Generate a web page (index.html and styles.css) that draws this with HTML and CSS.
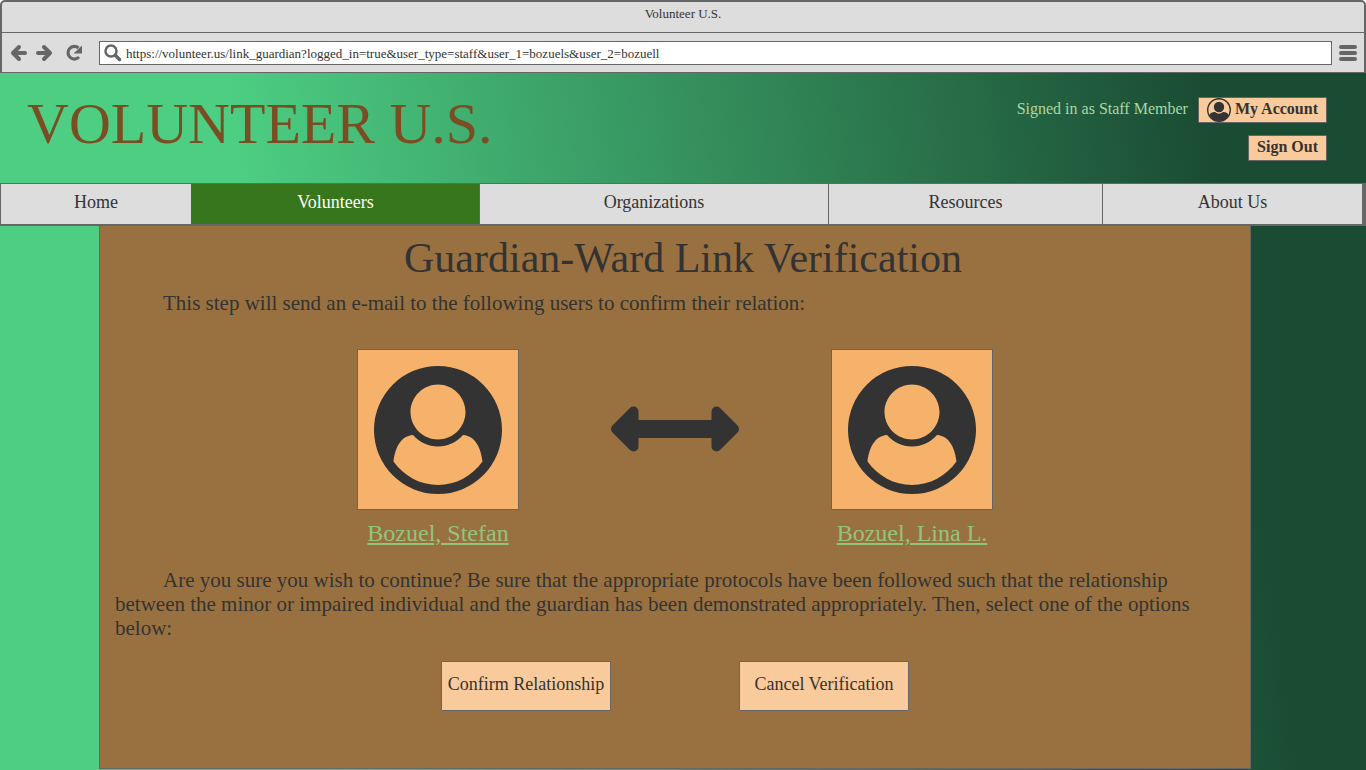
FILE: index.html
```html
<!DOCTYPE html>
<html lang="en">
<head>
<meta charset="utf-8">
<meta name="viewport" content="width=device-width, initial-scale=1">
<title>Volunteer U.S.</title>
<link rel="stylesheet" href="styles.css">
</head>
<body>
<svg class="defs" aria-hidden="true">
  <symbol id="person" viewBox="0 0 128 128">
    <path fill-rule="evenodd" d="M64 0a64 64 0 1 1 0 128a64 64 0 1 1 0-128zM64 18.500C49 18.500 36.500 31 36.500 46S49 73.500 64 73.500S91.500 61 91.500 46S79 18.500 64 18.500zM39 69C26 70 21 83 19.500 95.500C30 110 46 119 64 119S98 110 108.500 95.500C107 83 102 70 89 69C82 76.500 74 80.500 64 80.500S46 76.500 39 69z"/>
  </symbol>
</svg>
<div class="window">
  <div class="chrome">
    <div class="titlebar">Volunteer U.S.</div>
    <div class="toolbar">
      <button class="tool" type="button" aria-label="Back"><svg width="18" height="18" viewBox="0 0 18 18"><path d="M9 3L3 9l6 6M3 9h12" fill="none" stroke="currentColor" stroke-width="4" stroke-linecap="round" stroke-linejoin="round"/></svg></button>
      <button class="tool" type="button" aria-label="Forward"><svg width="18" height="18" viewBox="0 0 18 18"><path d="M9 3l6 6-6 6M15 9H3" fill="none" stroke="currentColor" stroke-width="4" stroke-linecap="round" stroke-linejoin="round"/></svg></button>
      <button class="tool reload" type="button" aria-label="Reload"><svg width="18" height="18" viewBox="0 0 18 18"><path d="M13.500 4A6.300 6.300 0 1 0 14 13" fill="none" stroke="currentColor" stroke-width="3.200"/><path d="M17 1.500v8H8.500z" fill="currentColor"/></svg></button>
      <label class="address">
        <svg width="18" height="18" viewBox="0 0 18 18" aria-hidden="true"><circle cx="7" cy="7" r="5.500" fill="none" stroke="currentColor" stroke-width="2.500"/><path d="M11.500 11.500l4 4" stroke="currentColor" stroke-width="3.500" stroke-linecap="round"/></svg>
        <input type="text" aria-label="Address" value="https://volunteer.us/link_guardian?logged_in=true&amp;user_type=staff&amp;user_1=bozuels&amp;user_2=bozuell">
      </label>
      <button class="tool" type="button" aria-label="Menu"><svg width="18" height="18" viewBox="0 0 18 18"><path d="M2 3h14M2 9h14M2 15h14" stroke="currentColor" stroke-width="4" stroke-linecap="round"/></svg></button>
    </div>
  </div>
  <div class="site">
    <header class="banner">
      <h1 class="brand">VOLUNTEER U.S.</h1>
      <div class="account">
        <div class="account-row"><span class="status">Signed in as Staff Member</span>
          <button class="small-button" type="button"><svg width="24" height="24" viewBox="0 0 24 24" aria-hidden="true"><defs><clipPath id="badge"><circle cx="12" cy="12" r="11"/></clipPath></defs><circle cx="12" cy="12" r="11.300" fill="none" stroke="currentColor" stroke-width="1.400"/><circle cx="12" cy="9" r="5.200" fill="currentColor"/><path clip-path="url(#badge)" d="M2 24v-6q1-4 6-4q4 3.500 8 0q5 0 6 4v6z" fill="currentColor"/></svg><span>My Account</span></button></div>
        <button class="small-button" type="button"><span>Sign Out</span></button>
      </div>
    </header>
    <nav class="nav">
      <a href="#home">Home</a>
      <a href="#volunteers" class="current" aria-current="page">Volunteers</a>
      <a href="#organizations">Organizations</a>
      <a href="#resources">Resources</a>
      <a href="#about">About Us</a>
    </nav>
    <main class="panel">
      <h2>Guardian-Ward Link Verification</h2>
      <p>This step will send an e-mail to the following users to confirm their relation:</p>
      <div class="pair">
        <div class="user"><div class="avatar"><svg width="128" height="128"><use href="#person"/></svg></div><a href="#stefan">Bozuel, Stefan</a></div>
        <svg class="link-arrow" width="128" height="48" viewBox="0 0 128 48" aria-label="linked with"><path d="M5 24L22.500 6.500V41.500zM123 24L105.500 6.500V41.500z" fill="currentColor" stroke="currentColor" stroke-width="10" stroke-linejoin="round"/><path d="M22 15h84v18H22z" fill="currentColor"/></svg>
        <div class="user"><div class="avatar"><svg width="128" height="128"><use href="#person"/></svg></div><a href="#lina">Bozuel, Lina L.</a></div>
      </div>
      <p>Are you sure you wish to continue? Be sure that the appropriate protocols have been followed such that the relationship between the minor or impaired individual and the guardian has been demonstrated appropriately. Then, select one of the options below:</p>
      <div class="actions">
        <button type="button">Confirm Relationship</button>
        <button type="button">Cancel Verification</button>
      </div>
    </main>
  </div>
</div>
</body>
</html>
```
FILE: styles.css
```css
* { box-sizing: border-box; }
body { margin: 0; background: #fff; color: #333; font-family: "Liberation Serif", serif; }
button, input { font: inherit; color: inherit; }
.defs { position: absolute; width: 0; height: 0; }
.window { min-height: 100vh; display: flex; flex-direction: column; }
.chrome { background: #ddd; border: 2px solid #666; border-bottom-width: 1px; border-radius: 5px 5px 0 0; }
.titlebar { height: 31px; border-bottom: 1px solid #666; font-size: 13px; line-height: 24px; text-align: center; }
.toolbar { display: flex; align-items: center; gap: 7px; padding: 8px 7px 7px 8px; color: #666; }
.tool { display: block; padding: 0; border: 0; background: none; color: #666; }
.tool svg { display: block; }
.reload { margin: 0 9px 0 5px; }
.address { flex: 1; display: flex; align-items: center; gap: 4px; height: 24px; padding-left: 4px; border: 1px solid #666; background: #fff; }
.address input { flex: 1; min-width: 0; padding: 1px 0 0; border: 0; outline: 0; background: none; color: #333; font-size: 13px; }
.site { flex: 1; display: flex; flex-direction: column; padding-bottom: 1px; background: linear-gradient(82deg, #4dce83 22%, #1a4b33 89%); }
.banner { display: flex; justify-content: space-between; align-items: flex-start; height: 110px; padding: 24px 39px 0 27px; }
.brand { margin: 0; color: #7a4e22; font-size: 58px; line-height: 54px; font-weight: 400; }
.account { display: flex; flex-direction: column; align-items: flex-end; gap: 12px; }
.account-row { display: flex; align-items: center; gap: 10px; }
.status { color: #a9d9a0; font-size: 16px; line-height: 24px; padding-bottom: 2px; }
.small-button { display: flex; align-items: center; gap: 4px; height: 26px; padding: 0 8px; border: 1px solid #666; border-radius: 1px; background: #f9cb9c; color: #333; font-size: 16px; line-height: 20px; font-weight: 700; }
.small-button span { padding-bottom: 3px; }
.nav { display: grid; grid-template-columns: 190fr 288fr 349fr 274fr 260fr; height: 43px; border: solid #666; border-width: 1px 4px 2px 1px; background: #ddd; }
.nav a { color: #333; font-size: 18px; line-height: 36px; text-align: center; text-decoration: none; border-left: 1px solid #666; }
.nav a:first-child { border-left: 0; }
.nav .current { background: #38761d; color: #fff; border-color: #38761d; }
.panel { flex: 1; margin: 0 115px 0 99px; padding: 8px 15px 16px; border: 1px solid #666; border-top: 0; background: #997140; }
.panel h2 { margin: 0 0 9px; font-size: 42px; line-height: 48px; font-weight: 400; text-align: center; text-indent: 16px; }
.panel p { margin: 0; font-size: 21px; line-height: 24px; text-indent: 48px; }
.pair { display: flex; justify-content: center; align-items: flex-start; gap: 92px; padding: 34px 0 21px; }
.user { display: flex; flex-direction: column; align-items: center; width: 162px; gap: 9px; }
.avatar { padding: 16px 16px 15px; border: 1px solid #666; background: #f6b26b; }
.avatar svg { display: block; fill: #333; }
.user a { color: #93c47d; font-size: 24px; line-height: 28px; }
.link-arrow { margin-top: 56px; }
.actions { display: flex; justify-content: center; gap: 128px; padding-top: 21px; }
.actions button { width: 170px; height: 50px; padding: 0 0 4px; border: 1px solid #666; border-radius: 1px; background: #f9cb9c; font-size: 18px; }
```
